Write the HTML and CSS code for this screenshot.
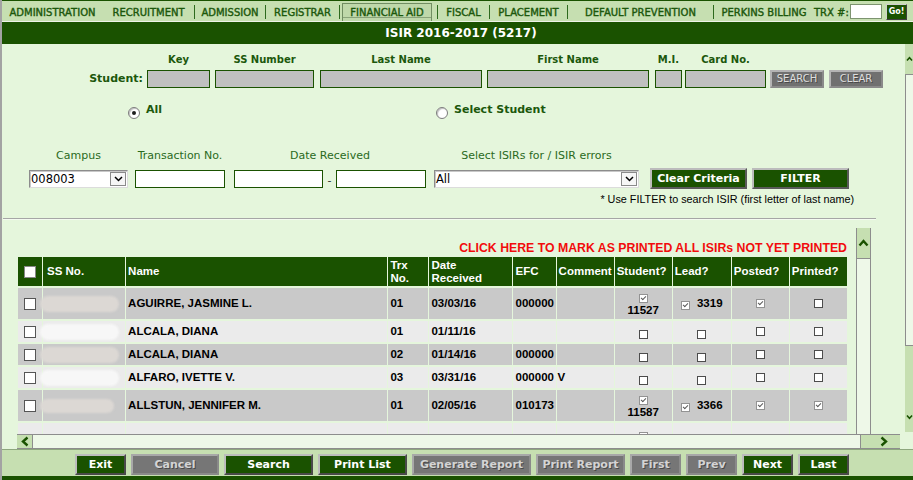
FILE: index.html
```html
<!DOCTYPE html>
<html>
<head>
<meta charset="utf-8">
<title>ISIR 2016-2017</title>
<link rel="stylesheet" href="styles.css">
</head>
<body>
<div class="page">
  <div class="nav">
    <span class="ni w-admin">ADMINISTRATION</span>
    <span class="ni w-recr">RECRUITMENT</span>
    <span class="bar"></span>
    <span class="ni w-adm">ADMISSION</span>
    <span class="bar"></span>
    <span class="ni w-reg">REGISTRAR</span>
    <span class="bar"></span>
    <span class="ni w-fin"><span class="sel">FINANCIAL AID</span></span>
    <span class="bar"></span>
    <span class="ni w-fis">FISCAL</span>
    <span class="bar"></span>
    <span class="ni w-pla">PLACEMENT</span>
    <span class="bar"></span>
    <span class="ni w-def">DEFAULT PREVENTION</span>
    <span class="bar"></span>
    <span class="ni w-per">PERKINS BILLING</span>
    <span class="ni trx">TRX #:</span>
    <span class="trx-in"></span>
    <span class="go">Go!</span>
  </div>
  <div class="title">ISIR 2016-2017 (5217)</div>

  <div class="main">
    <div class="content">
      <div class="srow">
        <div class="slabel">Student:</div>
        <div class="field f-key"><div class="lbl">Key</div><div class="gin"></div></div>
        <div class="field f-ss"><div class="lbl">SS Number</div><div class="gin"></div></div>
        <div class="field f-last"><div class="lbl">Last Name</div><div class="gin"></div></div>
        <div class="field f-first"><div class="lbl">First Name</div><div class="gin"></div></div>
        <div class="field f-mi"><div class="lbl">M.I.</div><div class="gin"></div></div>
        <div class="field f-card"><div class="lbl">Card No.</div><div class="gin"></div></div>
        <div class="gbtn b-search">SEARCH</div>
        <div class="gbtn b-clear">CLEAR</div>
      </div>

      <div class="rrow">
        <div class="rgroup g-all"><span class="radio on"></span><span class="rlbl">All</span></div>
        <div class="rgroup"><span class="radio"></span><span class="rlbl">Select Student</span></div>
      </div>

      <div class="frow">
        <div class="fgroup fg-campus">
          <div class="flbl">Campus</div>
          <div class="selbox"><span class="seltxt">008003</span><span class="selarr"><svg width="9" height="6" viewBox="0 0 9 6"><polyline points="1,1 4.5,4.5 8,1" fill="none" stroke="#000" stroke-width="1.5"/></svg></span></div>
        </div>
        <div class="fgroup fg-trans">
          <div class="flbl">Transaction No.</div>
          <div class="win"></div>
        </div>
        <div class="fgroup fg-dates">
          <div class="flbl">Date Received</div>
          <div class="dpair"><div class="win d1"></div><span class="dash">-</span><div class="win d2"></div></div>
        </div>
        <div class="fgroup fg-isir">
          <div class="flbl">Select ISIRs for / ISIR errors</div>
          <div class="selbox"><span class="seltxt">All</span><span class="selarr"><svg width="9" height="6" viewBox="0 0 9 6"><polyline points="1,1 4.5,4.5 8,1" fill="none" stroke="#000" stroke-width="1.5"/></svg></span></div>
        </div>
        <div class="gbtn green b-cc">Clear Criteria</div>
        <div class="gbtn green b-filter">FILTER</div>
      </div>
      <div class="note">* Use FILTER to search ISIR (first letter of last name)</div>
      <div class="sep"></div>

      <div class="grid-area">
        <div class="grid-scroll">
          <div class="grid-inner">
            <div class="mark">CLICK HERE TO MARK AS PRINTED ALL ISIRs NOT YET PRINTED</div>
            <table class="isir">
              <colgroup>
                <col class="c1"><col class="c2"><col class="c3"><col class="c4"><col class="c5"><col class="c6"><col class="c7"><col class="c8"><col class="c9"><col class="c10"><col class="c11">
              </colgroup>
              <tr class="hd">
                <th class="ck"><span class="cb big"></span></th>
                <th class="ssh">SS No.</th>
                <th>Name</th>
                <th>Trx<br>No.</th>
                <th>Date<br>Received</th>
                <th class="efc">EFC</th>
                <th>Comment</th>
                <th>Student?</th>
                <th>Lead?</th>
                <th class="posh">Posted?</th>
                <th>Printed?</th>
              </tr>
              <tr class="dk tall">
                <td class="ck"><span class="cb big"></span></td>
                <td class="ss"><div class="pill beige"></div></td>
                <td>AGUIRRE, JASMINE L.</td>
                <td>01</td>
                <td>03/03/16</td>
                <td class="efc">000000</td>
                <td></td>
                <td class="ctr stu"><span class="cb sm on"></span><br>11527</td>
                <td class="ctr"><span class="cb sm on lead"></span>3319</td>
                <td class="ctr"><span class="cb sm on blk"></span></td>
                <td class="ctr"><span class="cb sm blk"></span></td>
              </tr>
              <tr class="lt">
                <td class="ck"><span class="cb big"></span></td>
                <td class="ss"><div class="pill white"></div></td>
                <td>ALCALA, DIANA</td>
                <td>01</td>
                <td>01/11/16</td>
                <td class="efc"></td>
                <td></td>
                <td class="ctr"><span class="cb sm blk low"></span></td>
                <td class="ctr"><span class="cb sm blk low"></span></td>
                <td class="ctr"><span class="cb sm blk"></span></td>
                <td class="ctr"><span class="cb sm blk"></span></td>
              </tr>
              <tr class="dk">
                <td class="ck"><span class="cb big"></span></td>
                <td class="ss"><div class="pill beige"></div></td>
                <td>ALCALA, DIANA</td>
                <td>02</td>
                <td>01/14/16</td>
                <td class="efc">000000</td>
                <td></td>
                <td class="ctr"><span class="cb sm blk low"></span></td>
                <td class="ctr"><span class="cb sm blk low"></span></td>
                <td class="ctr"><span class="cb sm blk"></span></td>
                <td class="ctr"><span class="cb sm blk"></span></td>
              </tr>
              <tr class="lt">
                <td class="ck"><span class="cb big"></span></td>
                <td class="ss"><div class="pill white"></div></td>
                <td>ALFARO, IVETTE V.</td>
                <td>03</td>
                <td>03/31/16</td>
                <td class="efc">000000</td>
                <td class="cm">V</td>
                <td class="ctr"><span class="cb sm blk low"></span></td>
                <td class="ctr"><span class="cb sm blk low"></span></td>
                <td class="ctr"><span class="cb sm blk"></span></td>
                <td class="ctr"><span class="cb sm blk"></span></td>
              </tr>
              <tr class="dk tall">
                <td class="ck"><span class="cb big"></span></td>
                <td class="ss"><div class="pill beige short"></div></td>
                <td>ALLSTUN, JENNIFER M.</td>
                <td>01</td>
                <td>02/05/16</td>
                <td class="efc">010173</td>
                <td></td>
                <td class="ctr stu"><span class="cb sm on"></span><br>11587</td>
                <td class="ctr"><span class="cb sm on lead"></span>3366</td>
                <td class="ctr"><span class="cb sm on blk"></span></td>
                <td class="ctr"><span class="cb sm on blk"></span></td>
              </tr>
              <tr class="lt tall">
                <td class="ck"></td>
                <td class="ss"></td>
                <td></td>
                <td></td>
                <td></td>
                <td class="efc"></td>
                <td></td>
                <td class="ctr stu"><span class="cb sm on"></span></td>
                <td class="ctr"></td>
                <td class="ctr"></td>
                <td class="ctr"></td>
              </tr>
            </table>
          </div>
          <div class="vbar">
            <div class="vup"><svg width="11" height="8" viewBox="0 0 11 8"><polyline points="1.5,6.5 5.5,2 9.5,6.5" fill="none" stroke="#1a5200" stroke-width="2.4"/></svg></div>
            <div class="vtrack"></div>
          </div>
        </div>
        <div class="hbar">
          <div class="hleft"><svg width="8" height="11" viewBox="0 0 8 11"><polyline points="6.5,1.5 2,5.5 6.5,9.5" fill="none" stroke="#1a5200" stroke-width="2.4"/></svg></div>
          <div class="htrack"></div>
          <div class="hright"><svg width="8" height="11" viewBox="0 0 8 11"><polyline points="1.5,1.5 6,5.5 1.5,9.5" fill="none" stroke="#1a5200" stroke-width="2.4"/></svg></div>
        </div>
      </div>
    </div>
    <div class="ovbar">
      <div class="oup"><svg width="11" height="8" viewBox="0 0 11 8"><polyline points="1.5,6.5 5.5,2 9.5,6.5" fill="none" stroke="#1a5200" stroke-width="2.4"/></svg></div>
      <div class="othumb"></div>
      <div class="otrack"></div>
      <div class="odown"><svg width="11" height="8" viewBox="0 0 11 8"><polyline points="1.5,1.5 5.5,6 9.5,1.5" fill="none" stroke="#1a5200" stroke-width="2.4"/></svg></div>
    </div>
  </div>

  <div class="footer">
    <div class="fbtn green w51">Exit</div>
    <div class="fbtn dis w88">Cancel</div>
    <div class="fbtn green w89">Search</div>
    <div class="fbtn green w89">Print List</div>
    <div class="fbtn dis w119">Generate Report</div>
    <div class="fbtn dis w89">Print Report</div>
    <div class="fbtn dis w51">First</div>
    <div class="fbtn dis w51">Prev</div>
    <div class="fbtn green w51">Next</div>
    <div class="fbtn green w51">Last</div>
  </div>
  <div class="footline"></div>
</div>
</body>
</html>
```

FILE: styles.css
```css
html, body {
  margin: 0;
  padding: 0;
  background: #e5f6dc;
}
body {
  width: 913px;
  height: 480px;
  overflow: hidden;
  font-family: "DejaVu Sans", Verdana, sans-serif;
}
.page {
  border-left: 2px solid #a3a3a3;
  height: 480px;
  box-sizing: border-box;
}

/* ---------- top navigation ---------- */
.nav {
  display: flex;
  align-items: flex-start;
  height: 20px;
  background: #c6dfb1;
  border-top: 1px solid #1a5200;
  border-bottom: 1px solid #eef3e8;
  font-size: 10px;
  color: #1c580c;
  -webkit-text-stroke: 0.4px #1c580c;
  white-space: nowrap;
}
.ni { display: block; text-align: center; line-height: 18px; margin-top: 3px; }
.w-admin { width: 101px; }
.w-recr { width: 91px; }
.w-adm { width: 70px; }
.w-reg { width: 73px; }
.w-fin { width: 97px; text-align: left; height: 18px; margin-top: 0; }
.w-fis { width: 51px; }
.w-pla { width: 77px; }
.w-def { width: 145px; }
.w-per { width: 100px; }
.bar {
  display: block;
  width: 1px;
  height: 14px;
  margin-top: 4px;
  background: #2e6a1e;
}
.sel {
  display: block;
  box-sizing: border-box;
  margin: 2px 0 0 2px;
  width: 90px;
  height: 18px;
  line-height: 18px;
  text-align: center;
  border: 1px solid #718d62;
  border-bottom: none;
  background: #bfd8aa;
  box-shadow: inset 0 -3px 0 #bfd8aa, inset 0 -4px 0 #8aa47a;
}
.trx { width: 36px; text-align: left; }
.trx-in {
  display: block;
  width: 32px;
  height: 15px;
  margin-top: 3px;
  box-sizing: border-box;
  background: #fff;
  border: 1px solid #7d9470;
}
.go {
  display: block;
  margin: 3px 0 0 4px;
  width: 21px;
  height: 16px;
  box-sizing: border-box;
  background: #1a5200;
  border: 1px solid;
  border-color: #d0d0d0 #404040 #404040 #d0d0d0;
  color: #fff;
  -webkit-text-stroke: 0;
  font-weight: bold;
  font-size: 8px;
  line-height: 14px;
  text-align: center;
}

/* ---------- title ---------- */
.title {
  height: 22px;
  line-height: 22px;
  background: #1a5200;
  color: #fff;
  font-weight: bold;
  font-size: 12px;
  text-align: center;
  padding-left: 7px;
}

/* ---------- main ---------- */
.main {
  display: flex;
  height: 405px;
  background: #e5f6dc;
}
.content {
  width: 903px;
  flex: none;
}

/* student row */
.srow {
  display: flex;
  align-items: flex-end;
  padding-top: 10px;
}
.slabel {
  width: 141px;
  text-align: right;
  font-weight: bold;
  font-size: 11px;
  line-height: 18px;
  color: #1c580c;
}
.field { display: flex; flex-direction: column; }
.field .lbl {
  text-align: center;
  font-weight: bold;
  font-size: 10px;
  line-height: 12px;
  margin-bottom: 4px;
  color: #1c580c;
  white-space: nowrap;
}
.gin {
  height: 18px;
  box-sizing: border-box;
  background: #c0c0c0;
  border: 1px solid #1a5200;
}
.f-key { width: 63px; margin-left: 4px; }
.f-ss { width: 99px; margin-left: 5px; }
.f-last { width: 162px; margin-left: 6px; }
.f-first { width: 162px; margin-left: 5px; }
.f-mi { width: 27px; margin-left: 6px; }
.f-card { width: 81px; margin-left: 3px; }

.gbtn {
  box-sizing: border-box;
  height: 18px;
  background: #707070;
  border: 2px solid;
  border-color: #b4b4b4 #8a8a8a #8a8a8a #b4b4b4;
  color: #dedede;
  text-shadow: 1px 1px 0 #4a4a4a;
  font-size: 10px;
  line-height: 14px;
  text-align: center;
  white-space: nowrap;
}
.b-search { width: 54px; margin-left: 4px; }
.b-clear { width: 54px; margin-left: 5px; }

/* radios */
.rrow {
  display: flex;
  align-items: flex-start;
  margin-top: 15px;
  padding-left: 126px;
}
.rgroup { display: flex; align-items: flex-start; }
.g-all { width: 308px; }
.radio {
  display: block;
  width: 12px;
  height: 12px;
  box-sizing: border-box;
  margin-top: 4px;
  border-radius: 50%;
  border: 1px solid #7c7c7c;
  background: #fff;
  box-shadow: inset 1px 1px 1px #c0c0c0;
  position: relative;
}
.radio.on::after {
  content: "";
  position: absolute;
  left: 3px;
  top: 3px;
  width: 4px;
  height: 4px;
  border-radius: 50%;
  background: #1e1e1e;
}
.rlbl {
  margin-left: 6px;
  font-weight: bold;
  font-size: 11px;
  line-height: 13px;
  color: #1c580c;
}

/* filters */
.frow {
  display: flex;
  align-items: flex-end;
  margin-top: 30px;
}
.fgroup { display: flex; flex-direction: column; }
.flbl {
  text-align: center;
  font-size: 11px;
  line-height: 13px;
  color: #2a6a1c;
  margin-bottom: 8px;
  white-space: nowrap;
}
.fg-campus { width: 99px; margin-left: 27px; }
.fg-trans { width: 90px; margin-left: 7px; }
.fg-dates { width: 192px; margin-left: 9px; }
.fg-isir { width: 205px; margin-left: 8px; }
.win {
  height: 18px;
  box-sizing: border-box;
  background: #fff;
  border: 1px solid #1a5200;
  margin-bottom: 1px;
}
.dpair { display: flex; align-items: flex-end; }
.d1 { width: 89px; }
.d2 { width: 90px; }
.dash {
  width: 13px;
  text-align: center;
  font-size: 11px;
  line-height: 14px;
  color: #333;
  margin-bottom: 1px;
}
.selbox {
  height: 18px;
  box-sizing: border-box;
  margin-bottom: 1px;
  display: flex;
  align-items: center;
  justify-content: space-between;
  background: #fff;
  border: 1px solid;
  border-color: #8c8c8c #dcdcdc #dcdcdc #8c8c8c;
  box-shadow: inset 1px 1px 0 #c8c8c8;
}
.seltxt {
  padding-left: 1px;
  font-size: 11.5px;
  color: #000;
  line-height: 16px;
}
.selarr {
  display: flex;
  align-items: center;
  justify-content: center;
  width: 16px;
  height: 14px;
  box-sizing: border-box;
  margin-right: 1px;
  border: 1px solid #8a8a8a;
  background: #f6f6f6;
}
.gbtn.green {
  height: 21px;
  background: #1a5200;
  color: #fff;
  text-shadow: none;
  font-weight: bold;
  font-size: 11px;
  line-height: 17px;
  border-color: #bcbcbc #5a5a5a #5a5a5a #bcbcbc;
}
.b-cc { width: 97px; margin-left: 11px; }
.b-filter { width: 97px; margin-left: 5px; }

.note {
  margin-top: 4px;
  padding-right: 51px;
  text-align: right;
  font-family: "Liberation Sans", Arial, sans-serif;
  font-size: 10.8px;
  line-height: 13px;
  color: #000;
}
.sep {
  margin: 12px 0 0 1px;
  width: 873px;
  border-top: 1px solid #a6a6a6;
  border-bottom: 1px solid #f4fbf0;
}

/* ---------- grid ---------- */
.grid-area {
  margin: 8px 0 0 15px;
}
.grid-scroll {
  display: flex;
  width: 854px;
  height: 206px;
}
.grid-inner {
  width: 839px;
  height: 206px;
  overflow: hidden;
  padding-top: 14px;
  box-sizing: border-box;
}
.mark {
  text-align: right;
  padding-right: 9px;
  font-family: "Liberation Sans", Arial, sans-serif;
  font-weight: bold;
  font-size: 12.3px;
  line-height: 13px;
  color: #f20c0c;
  white-space: nowrap;
}
.isir {
  table-layout: fixed;
  width: 831px;
  border-collapse: separate;
  border-spacing: 1px 2px;
  font-family: "Liberation Sans", Arial, sans-serif;
  font-weight: bold;
  font-size: 11.5px;
}
.c1 { width: 24px; }
.c2 { width: 82px; }
.c3 { width: 261px; }
.c4 { width: 40px; }
.c5 { width: 82px; }
.c6 { width: 43px; }
.c7 { width: 57px; }
.c8 { width: 57px; }
.c9 { width: 58px; }
.c10 { width: 57px; }
.c11 { width: 57px; }

.isir th, .isir td {
  padding: 0 2px;
  text-align: left;
  vertical-align: middle;
  white-space: nowrap;
  overflow: hidden;
}
.isir tr.hd { height: 29px; }
.isir th {
  background: #1a5200;
  color: #fff;
  font-weight: bold;
  line-height: 13px;
}
.isir th.ssh { padding-left: 4px; }
.isir th.efc, .isir td.efc { padding-left: 3px; }
.isir tr { height: 21px; }
.isir tr.tall { height: 31px; }
.isir tr.dk td { background: #c9c9c9; }
.isir tr.lt td { background: #ebebeb; }
.isir td { color: #000; line-height: 13px; }
.isir td.cm { padding-left: 1px; }
.isir .ck { text-align: center; padding: 0; }
.isir td.ctr { text-align: center; padding: 0; }
.isir td.ss { padding: 0; overflow: visible; }
.isir td.stu { line-height: 12px; }
.isir tr.lt.tall td.stu { vertical-align: top; padding-top: 7px; }

.pill {
  margin-left: -3px;
  width: 79px;
  height: 16px;
  border-radius: 8px;
  filter: blur(1.2px);
}
.pill.beige { background: #dcd8d4; }
.pill.white { background: #f7f7f7; }
.pill.short { width: 74px; height: 14px; }

.cb {
  display: inline-block;
  box-sizing: border-box;
  background: #fff;
  border: 1px solid #8c8c8c;
  vertical-align: middle;
  position: relative;
}
.cb.big {
  width: 12px;
  height: 12px;
  border-color: #555;
}
th .cb.big { border-color: #888; }
.cb.sm {
  width: 9px;
  height: 9px;
}
.cb.blk { border-color: #4c4c4c; }
.cb.on { border-color: #939393; }
.cb.on::after {
  content: "";
  position: absolute;
  left: 2.5px;
  top: 0px;
  width: 2px;
  height: 4px;
  border: solid #5a5a5a;
  border-width: 0 1px 1px 0;
  transform: rotate(45deg);
}
.cb.low { display: block; margin: 6px auto 0; }
td.ctr > .cb.blk:only-child { display: block; margin: 0 auto; }
td.ctr > .cb.blk.low { margin-top: 6px; }
.cb.lead {
  vertical-align: -3px;
  margin-right: 7px;
}

/* scrollbars */
.vbar {
  width: 15px;
  box-sizing: border-box;
  border-left: 1px solid #8d8d8d;
  border-right: 1px solid #8d8d8d;
  display: flex;
  flex-direction: column;
}
.vup {
  height: 30px;
  background: #c6dfb1;
  display: flex;
  align-items: center;
  justify-content: center;
}
.vtrack {
  flex: 1;
  background: #eef8e8;
  border-top: 1px solid #8d8d8d;
}
.hbar {
  display: flex;
  width: 883px;
  height: 15px;
  box-sizing: border-box;
  border-top: 1px solid #8d8d8d;
  border-bottom: 1px solid #8d8d8d;
}
.hleft {
  width: 15px;
  background: #c6dfb1;
  border-right: 1px solid #8d8d8d;
  display: flex;
  align-items: center;
  justify-content: center;
}
.htrack {
  width: 827px;
  background: #eef8e8;
  border-right: 1px solid #8d8d8d;
}
.hright {
  flex: 1;
  background: #c6dfb1;
  display: flex;
  align-items: center;
  justify-content: flex-end;
  padding-right: 12px;
}

.ovbar {
  width: 8px;
  flex: none;
  display: flex;
  flex-direction: column;
  overflow: hidden;
}
.oup {
  height: 30px;
  background: #c6dfb1;
  display: flex;
  align-items: center;
  padding-left: 1px;
}
.othumb {
  height: 272px;
  box-sizing: border-box;
  background: #eef8e8;
  border: 1px solid #8d8d8d;
  border-right: none;
}
.otrack {
  flex: 1;
  background: #c6dfb1;
}
.odown {
  height: 30px;
  background: #c6dfb1;
  display: flex;
  align-items: center;
  padding-left: 1px;
  margin-bottom: 17px;
}

/* ---------- footer ---------- */
.footer {
  display: flex;
  align-items: flex-start;
  gap: 5px;
  height: 22px;
  padding: 4px 0 0 73px;
  background: #c6dfb1;
  border-top: 1px solid #8ea77e;
}
.fbtn {
  box-sizing: border-box;
  height: 21px;
  border: 2px solid;
  font-weight: bold;
  font-size: 11px;
  line-height: 17px;
  text-align: center;
  white-space: nowrap;
}
.fbtn.green {
  background: #1a5200;
  color: #fff;
  border-color: #bcbcbc #4a4a4a #4a4a4a #bcbcbc;
}
.fbtn.dis {
  background: #767676;
  color: #d4d4d4;
  text-shadow: 1px 1px 0 #4a4a4a;
  border-color: #a8a8a8 #8a8a8a #8a8a8a #a8a8a8;
}
.w51 { width: 51px; }
.w88 { width: 88px; }
.w89 { width: 89px; }
.w119 { width: 119px; }
.footline {
  height: 4px;
  background: #1a5200;
}
```
